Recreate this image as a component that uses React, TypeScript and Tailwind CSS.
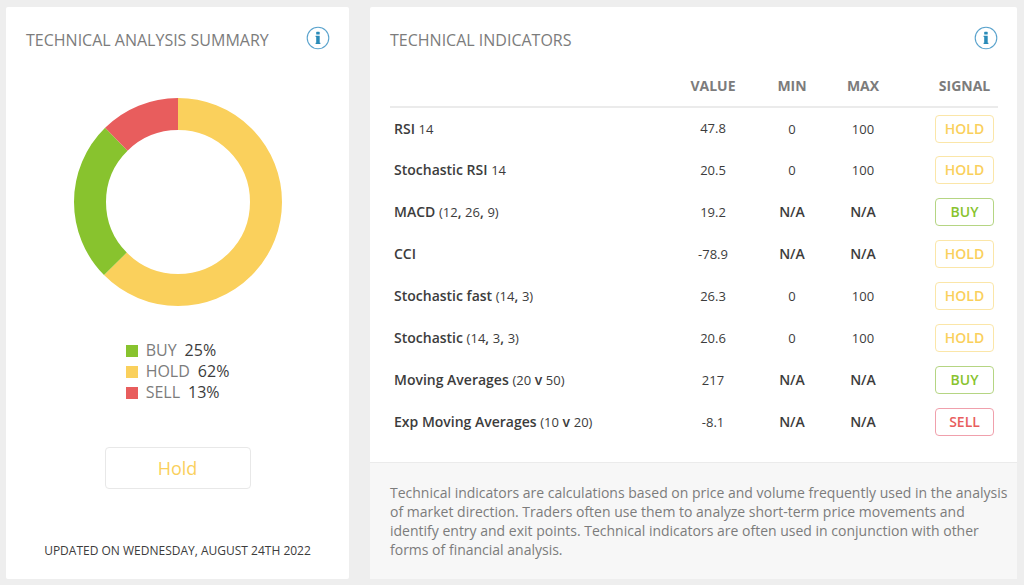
type Signal = "BUY" | "HOLD" | "SELL";

type Indicator = {
  name: string;
  params?: string;
  value: string;
  min: string;
  max: string;
  signal: Signal;
};

const indicators: Indicator[] = [
  { name: "RSI", params: "14", value: "47.8", min: "0", max: "100", signal: "HOLD" },
  { name: "Stochastic RSI", params: "14", value: "20.5", min: "0", max: "100", signal: "HOLD" },
  { name: "MACD", params: "(12, 26, 9)", value: "19.2", min: "N/A", max: "N/A", signal: "BUY" },
  { name: "CCI", value: "-78.9", min: "N/A", max: "N/A", signal: "HOLD" },
  { name: "Stochastic fast", params: "(14, 3)", value: "26.3", min: "0", max: "100", signal: "HOLD" },
  { name: "Stochastic", params: "(14, 3, 3)", value: "20.6", min: "0", max: "100", signal: "HOLD" },
  { name: "Moving Averages", params: "(20 v 50)", value: "217", min: "N/A", max: "N/A", signal: "BUY" },
  { name: "Exp Moving Averages", params: "(10 v 20)", value: "-8.1", min: "N/A", max: "N/A", signal: "SELL" },
];

// drawn clockwise from the top
const slices = [
  { label: "HOLD", percent: 62.5, color: "#fad05c" },
  { label: "BUY", percent: 25, color: "#88c32e" },
  { label: "SELL", percent: 12.5, color: "#e85d5d" },
];

const legend = [
  { label: "BUY", percent: 25, swatch: "bg-[#88c32e]" },
  { label: "HOLD", percent: 62, swatch: "bg-[#fad05c]" },
  { label: "SELL", percent: 13, swatch: "bg-[#e85d5d]" },
];

const signalStyles: Record<Signal, string> = {
  BUY: "border-[#b5d583] text-[#88c32e]",
  HOLD: "border-[#fbe6a8] text-[#fad05c]",
  SELL: "border-[#f0a0ac] text-[#e85d5d]",
};

function InfoButton({ label }: { label: string }) {
  return (
    <button type="button" aria-label={label} className="shrink-0">
      <svg width="24" height="24" viewBox="0 0 24 24" fill="none">
        <circle cx="12" cy="12" r="10.8" stroke="#5aa3cd" strokeWidth="1.1" />
        <rect x="10.2" y="5.8" width="3.5" height="2.7" rx="0.6" fill="#2a8bb8" />
        <path d="M9.6 9.7h4.1v7h0.7v1.3H9.6v-1.3h0.6v-5.7H9.6z" fill="#2a8bb8" />
      </svg>
    </button>
  );
}

function Donut() {
  const r = 88;
  const length = 2 * Math.PI * r;
  let start = 0;

  return (
    <svg viewBox="0 0 208 208" className="w-52 h-52" role="img" aria-label="Signals">
      <g transform="rotate(-90 104 104)" fill="none" strokeWidth="32">
        {slices.map((slice) => {
          const dash = (slice.percent / 100) * length;
          const offset = -start;
          start += dash;
          return (
            <circle
              key={slice.label}
              cx="104"
              cy="104"
              r={r}
              stroke={slice.color}
              strokeDasharray={`${dash} ${length - dash}`}
              strokeDashoffset={offset}
            />
          );
        })}
      </g>
    </svg>
  );
}

// digits and brackets are lighter and smaller than the words around them
function Mixed({ text }: { text: string }) {
  return (
    <>
      {text.split(/([\d()]+)/).map((part, index) =>
        /[\d()]/.test(part) ? (
          <span key={index} className="text-[13px] font-normal">
            {part}
          </span>
        ) : (
          part
        ),
      )}
    </>
  );
}

function Summary() {
  return (
    <section className="flex flex-col rounded-xs bg-white">
      <div className="flex items-start justify-between pt-[19px] pr-[19px] pl-5">
        <h2 className="pt-0.5 text-base text-[#7c7c7c]">TECHNICAL ANALYSIS SUMMARY</h2>
        <InfoButton label="About the analysis summary" />
      </div>
      <div className="flex flex-col items-center pt-[46px]">
        <Donut />
        <ul className="mt-[34px] text-base leading-[21px] text-[#7c7c7c]">
          {legend.map((item) => (
            <li key={item.label} className="flex items-center">
              <span className={`mr-2 size-3 ${item.swatch}`} />
              {item.label}
              <span className="ml-2 text-[#3c3c3c]">{item.percent}%</span>
            </li>
          ))}
        </ul>
        <button
          type="button"
          className="mt-11 h-[42px] w-[146px] rounded border border-[#e8e8e8] text-lg text-[#fad05c]"
        >
          Hold
        </button>
      </div>
      <p className="mt-auto pb-5 text-center text-xs text-[#3c3c3c]">
        UPDATED ON WEDNESDAY, AUGUST 24TH 2022
      </p>
    </section>
  );
}

function Indicators() {
  return (
    <section className="flex flex-col rounded-xs bg-white">
      <div className="flex items-start justify-between pt-[19px] pr-[19px] pl-5">
        <h2 className="pt-0.5 text-base text-[#7c7c7c]">TECHNICAL INDICATORS</h2>
        <InfoButton label="About the indicators" />
      </div>
      <div className="pt-[13px] pr-[19px] pl-5">
        <table className="w-full table-fixed text-center text-sm font-semibold text-[#3c3c3c]">
          <thead>
            <tr className="h-[42px] border-b-2 border-[#ebebeb] text-[#7c7c7c]">
              <th aria-label="Indicator" />
              <th className="w-[88px] font-bold">VALUE</th>
              <th className="w-[70px] font-bold">MIN</th>
              <th className="w-[72px] font-bold">MAX</th>
              <th className="w-[99px] pl-8 font-bold">SIGNAL</th>
            </tr>
          </thead>
          <tbody>
            {indicators.map((row) => (
              <tr key={row.name} className="h-[42px]">
                <td className="pl-1 text-left">
                  {row.name} {row.params && <Mixed text={row.params} />}
                </td>
                <td className="text-[13px] font-normal">{row.value}</td>
                <td>
                  <Mixed text={row.min} />
                </td>
                <td>
                  <Mixed text={row.max} />
                </td>
                <td className="pl-8">
                  <span
                    className={`mx-auto block h-7 w-[59px] rounded border leading-[26px] ${signalStyles[row.signal]}`}
                  >
                    {row.signal}
                  </span>
                </td>
              </tr>
            ))}
          </tbody>
        </table>
      </div>
      <p className="mt-[19px] flex-1 border-t border-[#ebebeb] bg-[#f7f7f7] pt-5 pr-2 pb-5 pl-5 text-sm leading-[19px] text-[#7c7c7c]">
        Technical indicators are calculations based on price and volume frequently used in the
        analysis of market direction. Traders often use them to analyze short-term price movements
        and identify entry and exit points. Technical indicators are often used in conjunction with
        other forms of financial analysis.
      </p>
    </section>
  );
}

export default function App() {
  return (
    <main className="grid min-h-screen grid-cols-[343fr_647fr] gap-[21px] bg-[#eeeeee] py-[7px] pr-[7px] pl-1.5 font-['Open_Sans',sans-serif]">
      <Summary />
      <Indicators />
    </main>
  );
}
